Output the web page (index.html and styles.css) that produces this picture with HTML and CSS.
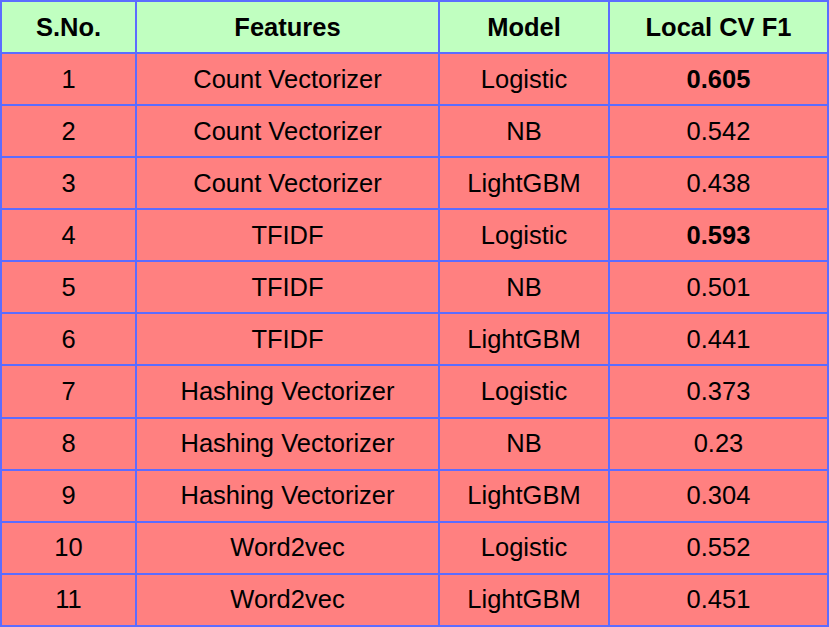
FILE: index.html
```html
<!DOCTYPE html>
<html>
<head>
<meta charset="utf-8">
<link rel="stylesheet" href="styles.css">
</head>
<body>
<table class="results">
  <colgroup>
    <col class="c1"><col class="c2"><col class="c3"><col class="c4">
  </colgroup>
  <thead>
    <tr><th>S.No.</th><th>Features</th><th>Model</th><th>Local CV F1</th></tr>
  </thead>
  <tbody>
    <tr><td>1</td><td>Count Vectorizer</td><td>Logistic</td><td class="best">0.605</td></tr>
    <tr><td>2</td><td>Count Vectorizer</td><td>NB</td><td>0.542</td></tr>
    <tr><td>3</td><td>Count Vectorizer</td><td>LightGBM</td><td>0.438</td></tr>
    <tr><td>4</td><td>TFIDF</td><td>Logistic</td><td class="best">0.593</td></tr>
    <tr><td>5</td><td>TFIDF</td><td>NB</td><td>0.501</td></tr>
    <tr><td>6</td><td>TFIDF</td><td>LightGBM</td><td>0.441</td></tr>
    <tr><td>7</td><td>Hashing Vectorizer</td><td>Logistic</td><td>0.373</td></tr>
    <tr><td>8</td><td>Hashing Vectorizer</td><td>NB</td><td>0.23</td></tr>
    <tr><td>9</td><td>Hashing Vectorizer</td><td>LightGBM</td><td>0.304</td></tr>
    <tr><td>10</td><td>Word2vec</td><td>Logistic</td><td>0.552</td></tr>
    <tr><td>11</td><td>Word2vec</td><td>LightGBM</td><td>0.451</td></tr>
  </tbody>
</table>
</body>
</html>
```
FILE: styles.css
```css
html, body {
  margin: 0;
  padding: 0;
  background: #ffffff;
}
.results {
  border-collapse: collapse;
  table-layout: fixed;
  width: 829px;
  height: 627px;
  font-family: "Liberation Sans", Arial, sans-serif;
  font-size: 25.5px;
  color: #000;
}
.c1 { width: 135px; }
.c2 { width: 303px; }
.c3 { width: 170px; }
.c4 { width: 219px; }
.results th,
.results td {
  border: 2px solid #5c6cff;
  text-align: center;
  vertical-align: middle;
  padding: 0;
  height: 50px;
  white-space: nowrap;
}
.results th {
  background: #c0ffc0;
  font-weight: bold;
}
.results td {
  background: #ff8080;
}
.results td.best {
  font-weight: bold;
}
```
